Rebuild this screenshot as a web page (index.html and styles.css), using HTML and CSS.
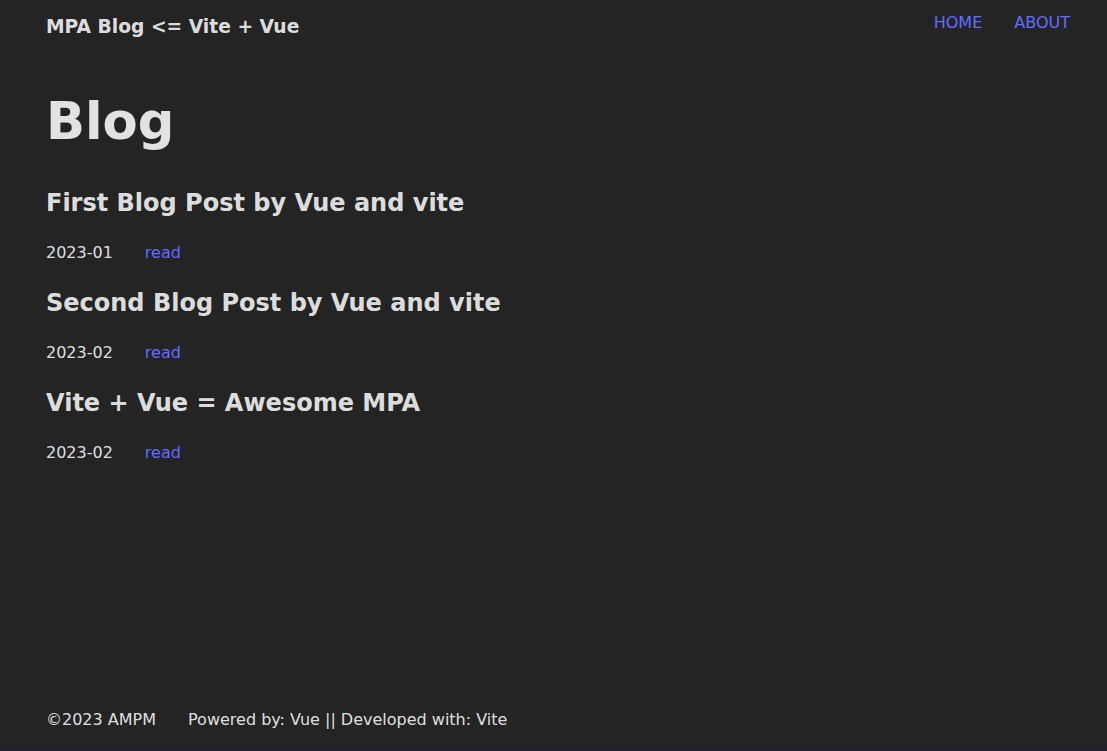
FILE: index.html
```html
<!DOCTYPE html>
<html lang="en">
<head>
    <meta charset="UTF-8">
    <meta name="viewport" content="width=device-width, initial-scale=1.0">
    <title>MPA Blog</title>
    <link rel="stylesheet" href="styles.css">
</head>
<body>
    <div class="app">
        <header class="topbar">
            <div class="brand">MPA Blog &lt;= Vite + Vue</div>
            <nav class="nav">
                <a href="#">HOME</a>
                <a href="#">ABOUT</a>
            </nav>
        </header>

        <main class="content">
            <h1>Blog</h1>
            <div class="post">
                <h2>First Blog Post by Vue and vite</h2>
                <div class="meta"><span>2023-01</span><a href="#">read</a></div>
            </div>
            <div class="post">
                <h2>Second Blog Post by Vue and vite</h2>
                <div class="meta"><span>2023-02</span><a href="#">read</a></div>
            </div>
            <div class="post">
                <h2>Vite + Vue = Awesome MPA</h2>
                <div class="meta"><span>2023-02</span><a href="#">read</a></div>
            </div>
        </main>

        <footer class="footer">
            <span>&copy;2023 AMPM</span>
            <span>Powered by: Vue || Developed with: Vite</span>
        </footer>
    </div>
</body>
</html>
```

FILE: styles.css
```css
/* base */
html {
    background-color: #20202e;
}

body {
    font-family: "DejaVu Sans", sans-serif;
    font-size: 16px;
    color: rgba(255, 255, 255, 0.87);
    margin: 0;
    padding: 0;
}

a {
    color: #646cff;
    text-decoration: none;
}

.app {
    min-height: 748px;
    box-sizing: border-box;
    background-color: #242424;
    display: flex;
    flex-direction: column;
    padding: 0 37px 0 46px;
}

/* header */
.topbar {
    display: flex;
    justify-content: space-between;
    align-items: flex-start;
    padding-top: 14px;
}

.brand {
    font-size: 18.7px;
    font-weight: bold;
    line-height: 26px;
}

.nav {
    display: flex;
    gap: 32px;
    line-height: 18px;
}

/* posts */
.content h1 {
    font-size: 51.2px;
    line-height: 56px;
    margin: 53px 0 38px;
}

.post h2 {
    font-size: 24px;
    line-height: 32px;
    margin: 0 0 24px;
}

.meta {
    display: flex;
    gap: 32px;
    line-height: 20px;
    margin-bottom: 24px;
}

/* footer */
.footer {
    margin-top: auto;
    display: flex;
    gap: 32px;
    line-height: 20px;
    padding-bottom: 18px;
}
```
